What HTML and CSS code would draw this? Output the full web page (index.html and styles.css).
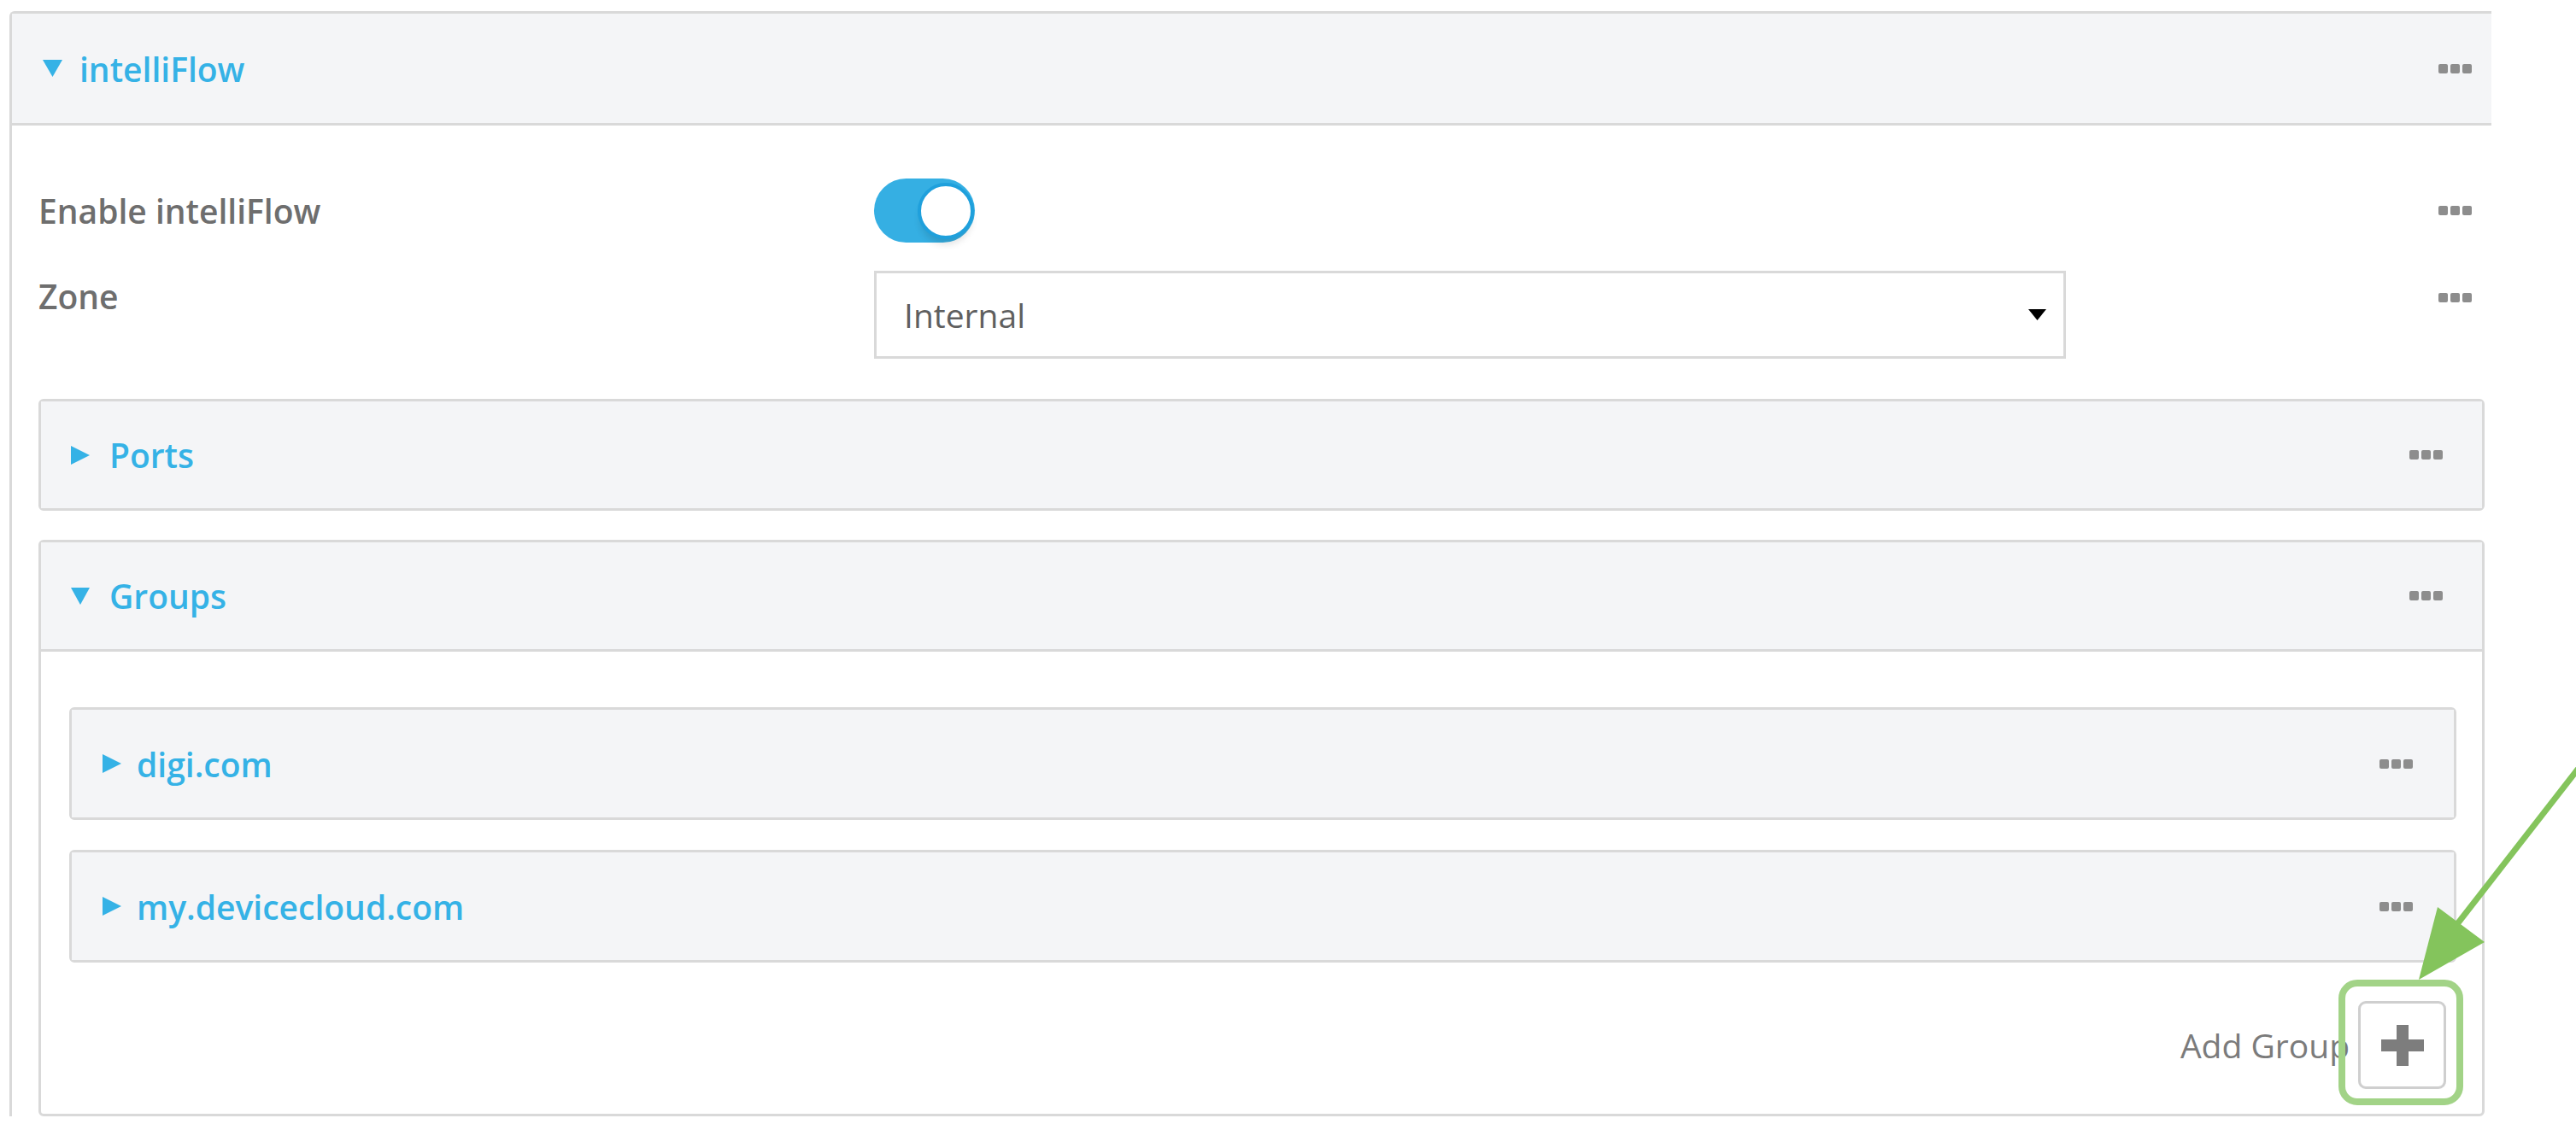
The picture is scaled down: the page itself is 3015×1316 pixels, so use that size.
FILE: index.html
```html
<!DOCTYPE html>
<html>
<head>
<meta charset="utf-8">
<link rel="stylesheet" href="styles.css">
</head>
<body>
<div class="page">
  <section class="panel outer">
    <div class="phead">
      <svg class="caret" width="23" height="20" viewBox="0 0 23 20"><polygon points="0,0 23,0 11.5,20"/></svg>
      <span class="ptitle">intelliFlow</span>
      <svg class="dots" width="39" height="13" viewBox="0 0 39 13"><rect x="0" y="1" width="11" height="11" rx="2"/><rect x="14" y="1" width="11" height="11" rx="2"/><rect x="28" y="1" width="11" height="11" rx="2"/></svg>
    </div>
    <div class="outer-body">
      <div class="field field-toggle">
        <div class="flabel">Enable intelliFlow</div>
        <div class="fctl"><span class="toggle"><span class="knob"></span></span></div>
        <div class="fdots"><svg class="dots" width="39" height="13" viewBox="0 0 39 13"><rect x="0" y="1" width="11" height="11" rx="2"/><rect x="14" y="1" width="11" height="11" rx="2"/><rect x="28" y="1" width="11" height="11" rx="2"/></svg></div>
      </div>
      <div class="field field-zone">
        <div class="flabel">Zone</div>
        <div class="fctl">
          <div class="select"><span>Internal</span><svg width="21" height="13" viewBox="0 0 21 13"><polygon points="0,0 21,0 10.5,13" fill="#000"/></svg></div>
        </div>
        <div class="fdots"><svg class="dots" width="39" height="13" viewBox="0 0 39 13"><rect x="0" y="1" width="11" height="11" rx="2"/><rect x="14" y="1" width="11" height="11" rx="2"/><rect x="28" y="1" width="11" height="11" rx="2"/></svg></div>
      </div>

      <section class="panel sub ports">
        <div class="phead">
          <svg class="caret" width="22" height="22" viewBox="0 0 22 22"><polygon points="0,0 22,11 0,22"/></svg>
          <span class="ptitle">Ports</span>
          <svg class="dots" width="39" height="13" viewBox="0 0 39 13"><rect x="0" y="1" width="11" height="11" rx="2"/><rect x="14" y="1" width="11" height="11" rx="2"/><rect x="28" y="1" width="11" height="11" rx="2"/></svg>
        </div>
      </section>

      <section class="panel sub groups">
        <div class="phead">
          <svg class="caret" width="22" height="20" viewBox="0 0 22 20"><polygon points="0,0 22,0 11,20"/></svg>
          <span class="ptitle">Groups</span>
          <svg class="dots" width="39" height="13" viewBox="0 0 39 13"><rect x="0" y="1" width="11" height="11" rx="2"/><rect x="14" y="1" width="11" height="11" rx="2"/><rect x="28" y="1" width="11" height="11" rx="2"/></svg>
        </div>
        <div class="groups-body">
          <section class="panel item">
            <div class="phead">
              <svg class="caret" width="22" height="22" viewBox="0 0 22 22"><polygon points="0,0 22,11 0,22"/></svg>
              <span class="ptitle">digi.com</span>
              <svg class="dots" width="39" height="13" viewBox="0 0 39 13"><rect x="0" y="1" width="11" height="11" rx="2"/><rect x="14" y="1" width="11" height="11" rx="2"/><rect x="28" y="1" width="11" height="11" rx="2"/></svg>
            </div>
          </section>
          <section class="panel item">
            <div class="phead">
              <svg class="caret" width="22" height="22" viewBox="0 0 22 22"><polygon points="0,0 22,11 0,22"/></svg>
              <span class="ptitle">my.devicecloud.com</span>
              <svg class="dots" width="39" height="13" viewBox="0 0 39 13"><rect x="0" y="1" width="11" height="11" rx="2"/><rect x="14" y="1" width="11" height="11" rx="2"/><rect x="28" y="1" width="11" height="11" rx="2"/></svg>
            </div>
          </section>
          <div class="add-row">
            <span class="add-label">Add Group</span>
            <button class="add-btn" type="button"><svg width="50" height="48" viewBox="0 0 50 48"><rect x="18" y="0" width="14" height="48"/><rect x="0" y="17" width="50" height="14"/></svg></button>
          </div>
        </div>
      </section>
    </div>
  </section>

  <svg class="annot" width="3015" height="1316" viewBox="0 0 3015 1316">
    <rect x="2741" y="1151" width="138" height="139" rx="18" ry="18" fill="none" stroke="#a2d387" stroke-width="8"/>
    <line x1="3030" y1="884" x2="2872" y2="1087" stroke="#84c45c" stroke-width="7"/>
    <polygon points="2853,1062 2908,1103 2831,1147" fill="#84c45c"/>
  </svg>
</div>
</body>
</html>
```

FILE: styles.css
```css
html, body {
  margin: 0;
  background: #ffffff;
}

body {
  font-family: "Open Sans", "Liberation Sans", sans-serif;
  width: 3015px;
  height: 1316px;
  overflow: hidden;
}

.page {
  position: relative;
  padding: 13px 0 0 11px;
  height: 1316px;
  box-sizing: border-box;
}

.panel {
  border: 3px solid #d9d9d9;
  border-radius: 6px;
  box-sizing: border-box;
  background: #ffffff;
}

.phead {
  display: flex;
  align-items: center;
  background: #f4f5f7;
}

.caret {
  fill: #35b2e6;
  flex: none;
}

.ptitle {
  flex: 1;
  color: #35b2e6;
  font-weight: 600;
  font-size: 39px;
  line-height: 1;
}

.dots {
  fill: #8d8d8d;
  flex: none;
  display: block;
}

/* outer panel */
.outer {
  width: 2905px;
  border-right: 0;
  border-bottom: 0;
  border-radius: 6px 0 0 0;
}

.outer > .phead {
  height: 128px;
  border-bottom: 3px solid #d9d9d9;
  padding: 0 23px 0 36px;
}

.outer > .phead .ptitle {
  margin-left: 20px;
}

.outer-body {
  padding: 62px 8px 0 31px;
}

/* form fields */
.field {
  display: flex;
  align-items: center;
}

.flabel {
  width: 978px;
  flex: none;
  font-weight: 600;
  font-size: 39px;
  color: #6e6e6e;
}

.fctl {
  flex: 1;
}

.fdots {
  margin-right: 15px;
  display: flex;
  align-items: center;
}

.field-toggle {
  height: 75px;
  margin-bottom: 33px;
}

.field-zone {
  align-items: flex-start;
  margin-bottom: 47px;
}

.field-zone .flabel {
  line-height: 60px;
}

.field-zone .fdots {
  height: 62px;
}

.toggle {
  display: block;
  position: relative;
  width: 118px;
  height: 75px;
  border-radius: 38px;
  background: #35afe3;
}

.knob {
  position: absolute;
  right: 1px;
  top: 5px;
  width: 66px;
  height: 66px;
  border-radius: 50%;
  background: #ffffff;
  border: 4px solid #1fa0dc;
  box-sizing: border-box;
  box-shadow: 0 9px 8px -3px rgba(0, 0, 0, 0.12);
}

.select {
  width: 1395px;
  height: 103px;
  border: 3px solid #d9d9d9;
  box-sizing: border-box;
  display: flex;
  align-items: center;
  justify-content: space-between;
  padding: 0 20px 0 32px;
  font-size: 39px;
  color: #5f5f5f;
}

/* sub panels */
.sub > .phead {
  height: 125px;
  padding: 0 46px 0 35px;
}

.sub > .phead .ptitle {
  margin-left: 23px;
}

.ports {
  margin-bottom: 34px;
}

.groups > .phead {
  border-bottom: 3px solid #d9d9d9;
}

.groups-body {
  padding: 65px 30px 29px 33px;
}

.item {
  margin-bottom: 35px;
}

.item > .phead {
  height: 126px;
  padding: 0 48px 0 36px;
}

.item .ptitle {
  margin-left: 18px;
}

.add-row {
  display: flex;
  justify-content: flex-end;
  align-items: center;
  margin-top: 45px;
  padding-right: 12px;
}

.add-label {
  font-size: 39px;
  color: #7b7b7b;
  margin-right: 10px;
}

.add-btn {
  width: 103px;
  height: 103px;
  border: 3px solid #cfcfcf;
  border-radius: 9px;
  background: #ffffff;
  display: flex;
  align-items: center;
  justify-content: center;
  padding: 0;
  fill: #7d7d7d;
}

.annot {
  position: absolute;
  left: 0;
  top: 0;
  pointer-events: none;
}
```
